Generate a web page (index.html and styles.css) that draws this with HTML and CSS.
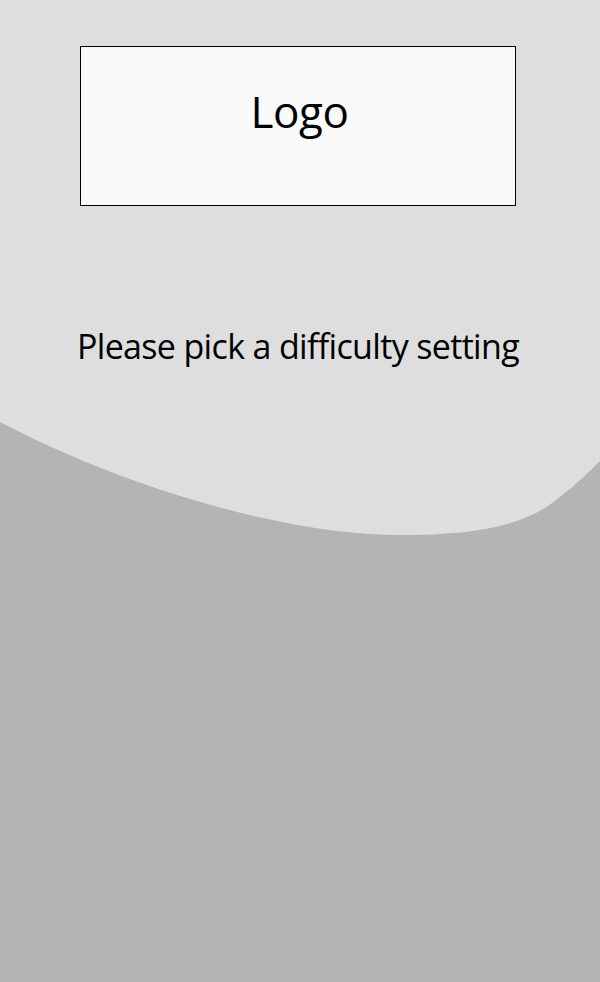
FILE: index.html
```html
<!DOCTYPE html>
<html lang="en">
<head>
<meta charset="utf-8">
<title>Difficulty</title>
<link rel="stylesheet" href="styles.css">
</head>
<body>
<header class="hero">
  <div class="logo-box"><span class="logo-text">Logo</span></div>
  <p class="prompt">Please pick a difficulty setting</p>
</header>
</body>
</html>
```
FILE: styles.css
```css
html, body {
  margin: 0;
  padding: 0;
}
body {
  width: 600px;
  height: 982px;
  background: #b4b4b4;
  font-family: "Open Sans", "Noto Sans", sans-serif;
  color: #000;
  overflow: hidden;
}
.hero {
  height: 536px;
  background: #dedede;
  clip-path: path('M0 0 L600 0 L600 461 C585 476 570 490 552 503 C520 527 470 535 400 535 C290 535 130 490 0 422 Z');
  display: flex;
  flex-direction: column;
  align-items: center;
  padding-top: 46px;
  box-sizing: border-box;
}
.logo-box {
  align-self: flex-start;
  margin-left: 80px;
  width: 436px;
  height: 160px;
  box-sizing: border-box;
  border: 1px solid #000;
  background: #fafafa;
  display: flex;
  justify-content: center;
  padding: 34px 0 0 3px;
}
.logo-text {
  font-size: 44px;
  line-height: 60px;
  height: 60px;
  letter-spacing: -0.5px;
}
.prompt {
  margin: 120px 0 0 -4px;
  font-size: 34px;
  line-height: 40px;
  letter-spacing: -0.66px;
}
```
